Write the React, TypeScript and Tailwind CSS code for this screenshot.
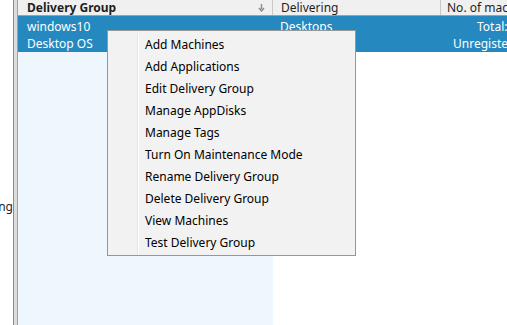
const menuItems = [
  'Add Machines',
  'Add Applications',
  'Edit Delivery Group',
  'Manage AppDisks',
  'Manage Tags',
  'Turn On Maintenance Mode',
  'Rename Delivery Group',
  'Delete Delivery Group',
  'View Machines',
  'Test Delivery Group',
];

export default function App() {
  return (
    <div className="relative flex w-[507px] h-[325px] overflow-hidden bg-white text-[12px] text-[#1e1e1e] font-['Noto_Sans',sans-serif]">
      {/* left pane, mostly off-screen */}
      <div className="w-[13px] shrink-0 overflow-hidden">
        <div className="mt-[199px] flex justify-end leading-[15px] whitespace-nowrap">Delivering</div>
      </div>
      {/* splitter */}
      <div className="w-[5px] shrink-0 border-l border-r border-l-[#8c8c8c] border-r-[#a0a0a0] bg-[#dcdcdc]" />

      {/* grid */}
      <div className="flex flex-col flex-1 min-w-0">
        <div className="flex h-[16px] shrink-0 border-b border-[#a0a0a0] bg-[#f0f0f0] leading-[15px]">
          <div className="flex items-center justify-between w-[255px] shrink-0 pl-[9px] pr-[7px] border-r border-[#c8c8c8]">
            <span className="font-bold">Delivery Group</span>
            <svg width="7" height="8" viewBox="0 0 7 8" className="text-[#8a8a8a]">
              <path d="M3.5 0v5M1 4l2.5 3L6 4" fill="none" stroke="currentColor" strokeWidth="1.4" />
            </svg>
          </div>
          <div className="w-[168px] shrink-0 pl-[8px] border-r border-[#c8c8c8] whitespace-nowrap">Delivering</div>
          <div className="flex-1 pl-[6px] whitespace-nowrap">No. of machines</div>
        </div>

        <div className="flex h-[36px] shrink-0 bg-[#2589c0] text-white leading-[17px] pt-[2px]">
          <div className="w-[255px] shrink-0 pl-[9px]">
            <div>windows10</div>
            <div>Desktop OS</div>
          </div>
          <div className="w-[168px] shrink-0 pl-[7px]">
            <div>Desktops</div>
          </div>
          <div className="flex-1 whitespace-nowrap">
            <div className="pl-[36px]">Total: 1</div>
            <div className="pl-[12px]">Unregistered: 0</div>
          </div>
        </div>

        <div className="flex flex-1">
          <div className="w-[255px] shrink-0 bg-[#eef6fe]" />
          <div className="flex-1" />
        </div>
      </div>

      {/* context menu */}
      <div className="absolute left-[107px] top-[30px] flex w-[249px] h-[226px] border border-[#979797] bg-[#f2f2f2] pt-[3px] pb-[1px]">
        <div className="w-[30px] shrink-0 border-r border-r-[#e2e2e2]" />
        <div className="flex flex-col flex-1 border-l border-l-white text-black">
          {menuItems.map((item) => (
            <div key={item} className="h-[22px] flex items-center pl-[6px] whitespace-nowrap">
              {item}
            </div>
          ))}
        </div>
      </div>
    </div>
  );
}
